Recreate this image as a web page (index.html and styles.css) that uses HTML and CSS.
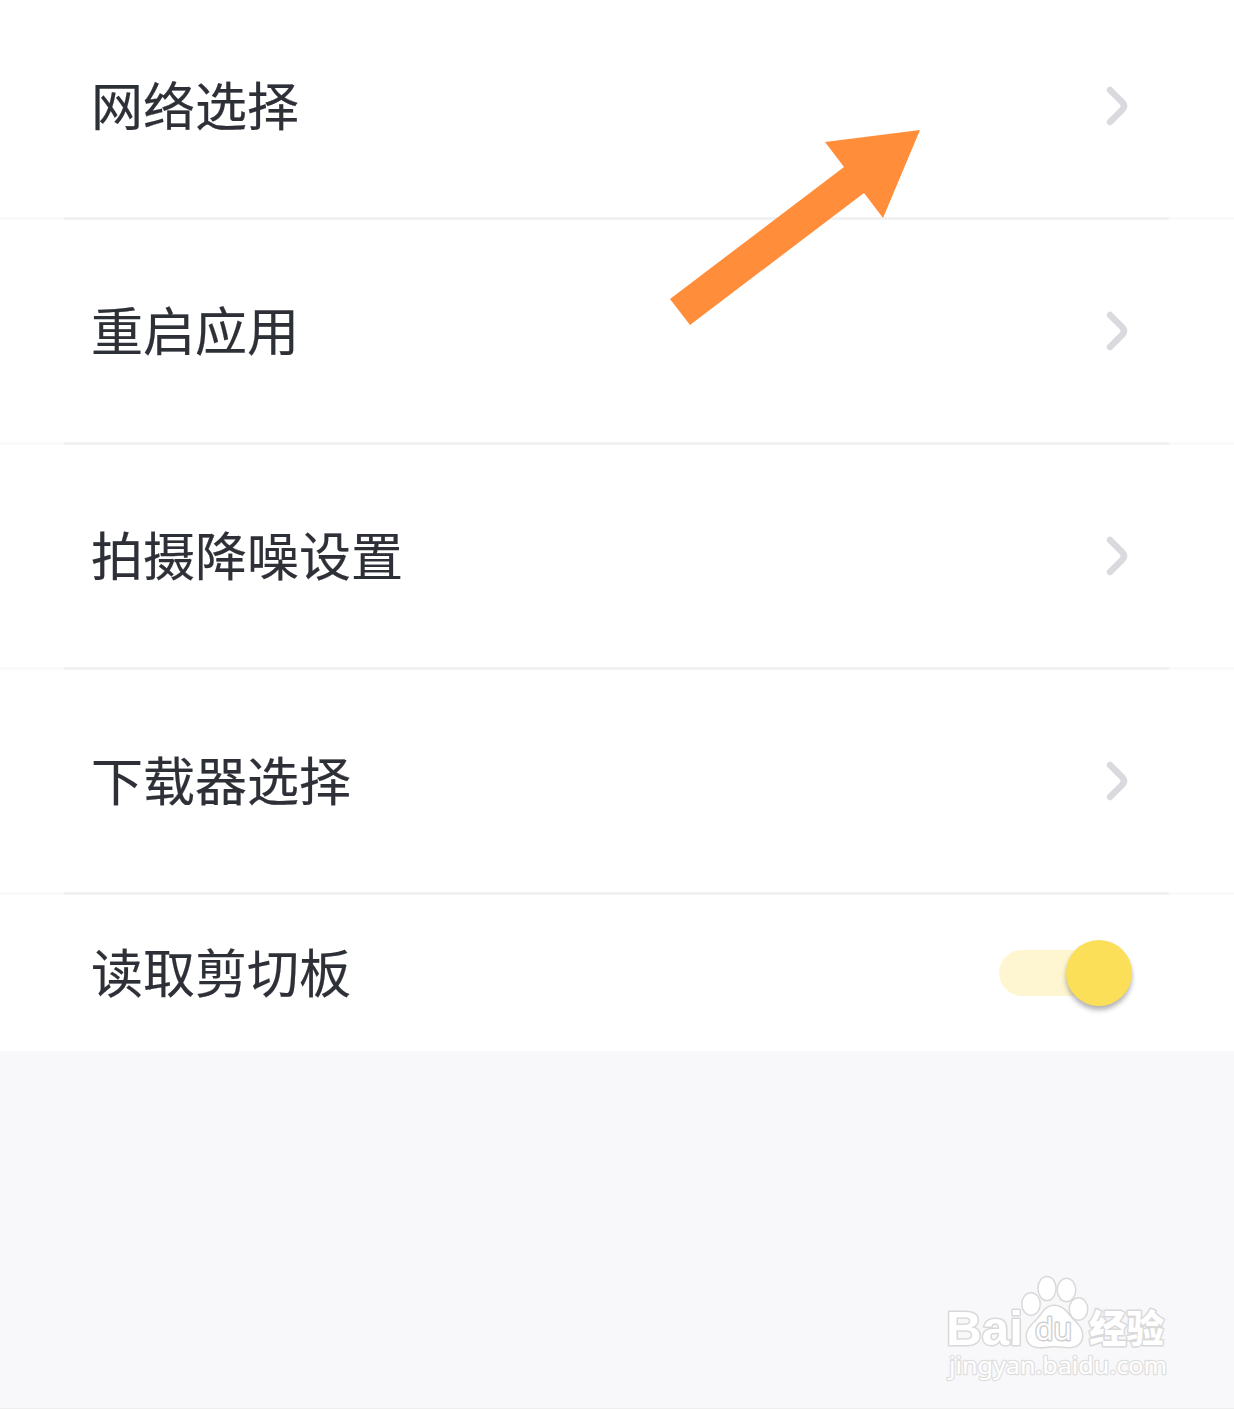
FILE: index.html
```html
<!DOCTYPE html>
<html lang="zh-CN">
  <head>
    <meta charset="utf-8">
    <title>设置</title>
    <link rel="stylesheet" href="styles.css">
  </head>
  <body>
    <ul class="settings">
      <li class="row">
        <span>网络选择</span>
        <svg class="chevron" width="24" height="42" viewBox="0 0 24 42"><path d="M5 5 L17 17 Q21 21 17 25 L5 37"/></svg>
      </li>
      <li class="row">
        <span>重启应用</span>
        <svg class="chevron" width="24" height="42" viewBox="0 0 24 42"><path d="M5 5 L17 17 Q21 21 17 25 L5 37"/></svg>
      </li>
      <li class="row">
        <span>拍摄降噪设置</span>
        <svg class="chevron" width="24" height="42" viewBox="0 0 24 42"><path d="M5 5 L17 17 Q21 21 17 25 L5 37"/></svg>
      </li>
      <li class="row">
        <span>下载器选择</span>
        <svg class="chevron" width="24" height="42" viewBox="0 0 24 42"><path d="M5 5 L17 17 Q21 21 17 25 L5 37"/></svg>
      </li>
      <li class="row row-short">
        <span>读取剪切板</span>
        <div class="switch"><div class="knob"></div></div>
      </li>
    </ul>

    <svg class="arrow" width="252" height="198" viewBox="0 0 252 198">
      <path d="M250 1 L213 89 L194 64 L20 196 L0 170 L174 38 L155 13 Z"/>
    </svg>

    <svg class="watermark" width="240" height="120" viewBox="0 0 240 120">
      <g class="outlined">
        <text class="bai" x="6" y="75" textLength="77" lengthAdjust="spacingAndGlyphs">Bai</text>
        <ellipse cx="91" cy="34" rx="8.5" ry="10.5"/>
        <ellipse cx="107" cy="18.500" rx="8.300" ry="11.300"/>
        <ellipse cx="126.500" cy="20" rx="8.500" ry="11"/>
        <ellipse cx="138.500" cy="39" rx="8.500" ry="10.500"/>
        <path d="M114 36 C106 36 103 43 98 49 C92 55 87 59 87 66 C87 74 93 77 100 77 C106 77 109 76 114 76 C120 76 124 77 129 77 C137 77 142 73 142 65 C142 58 137 54 132 49 C127 43 123 36 114 36 Z"/>
        <text class="du" x="95" y="70" textLength="37" lengthAdjust="spacingAndGlyphs">du</text>
        <text class="jingyan" x="149" y="72" textLength="75" lengthAdjust="spacingAndGlyphs">经验</text>
        <text class="url" x="9" y="104" textLength="218" lengthAdjust="spacingAndGlyphs">jingyan.baidu.com</text>
      </g>
    </svg>
  </body>
</html>
```
FILE: styles.css
```css
body {
  background: #f8f8fa;
  border-bottom: 1px solid #eeeeef;
  box-sizing: border-box;
  color: #2e3037;
  font-family: "Noto Sans CJK SC", sans-serif;
  height: 1409px;
  margin: 0;
  overflow: hidden;
}

.settings {
  background: white;
  height: 1051px;
  list-style: none;
  margin: 0;
  overflow: hidden;
  padding: 0;
}

.row {
  align-items: center;
  background: linear-gradient(to right, #fafafa 64px, #f1f1f2 64px, #f1f1f2 1169px, #fafafa 1169px) bottom / 100% 3px no-repeat;
  box-sizing: border-box;
  display: flex;
  font-size: 52px;
  height: 225px;
  justify-content: space-between;
  line-height: 76px;
  padding: 0 105px 3px 91px;
}

.row:first-child {
  margin-top: -5px;
}

.row span {
  padding-bottom: 4px;
  -webkit-text-stroke: 0.2px #2e3037;
}

.row-short {
  background: none;
  height: 156px;
  padding-bottom: 0;
  padding-right: 102px;
}

.chevron path {
  fill: none;
  stroke: #d9d9de;
  stroke-linecap: round;
  stroke-linejoin: round;
  stroke-width: 6.5;
}

.switch {
  align-items: center;
  background: #fef6d1;
  border-radius: 23px;
  display: flex;
  height: 46px;
  justify-content: flex-end;
  width: 133px;
}

.knob {
  background: #fbdf58;
  border-radius: 50%;
  box-shadow: 0 4px 5px rgba(0, 0, 0, 0.3);
  height: 66px;
  width: 66px;
}

.arrow {
  fill: #ff8d3a;
  left: 670px;
  position: absolute;
  top: 129px;
}

.watermark {
  left: 940px;
  position: absolute;
  top: 1270px;
}

.outlined {
  fill: white;
  paint-order: stroke;
  stroke: #d9d9da;
  stroke-linejoin: round;
  stroke-width: 3;
}

.bai {
  font: bold 48px "Liberation Sans", sans-serif;
}

.du {
  font: 31px "Open Sans", sans-serif;
  stroke: #cfcfd0;
}

.jingyan {
  font: 900 38px "Noto Sans CJK SC", sans-serif;
}

.url {
  font: 24px "Noto Sans", sans-serif;
  stroke: #dfdfe0;
  stroke-width: 2.5;
}
```
